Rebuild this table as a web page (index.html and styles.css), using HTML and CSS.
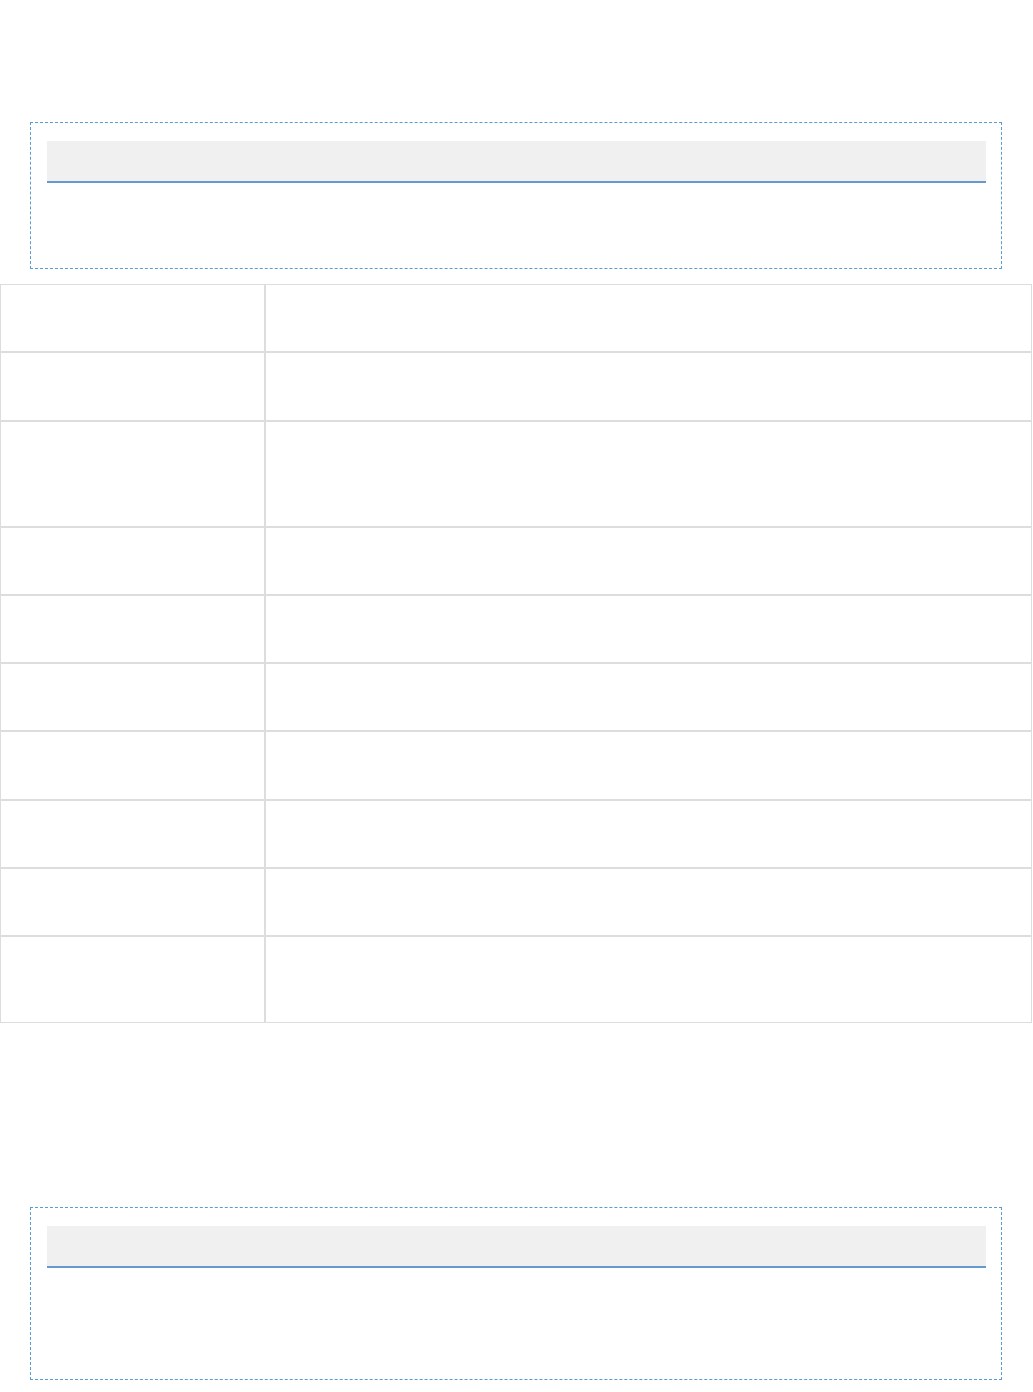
FILE: index.html
```html
<!DOCTYPE html>
<html lang="en">
<head>
    <meta charset="UTF-8" />
    <meta name="viewport" content="width=device-width, initial-scale=1" />
    <title>Layout</title>
    <link rel="stylesheet" href="styles.css">
</head>
<body>

    <section class="panel panel-top">
        <div class="panel-head"></div>
        <div class="panel-body"></div>
    </section>

    <table class="data-grid">
        <tr><td class="key"></td><td></td></tr>
        <tr><td class="key"></td><td></td></tr>
        <tr class="tall"><td class="key"></td><td></td></tr>
        <tr><td class="key"></td><td></td></tr>
        <tr><td class="key"></td><td></td></tr>
        <tr><td class="key"></td><td></td></tr>
        <tr><td class="key"></td><td></td></tr>
        <tr><td class="key"></td><td></td></tr>
        <tr><td class="key"></td><td></td></tr>
        <tr class="last"><td class="key"></td><td></td></tr>
    </table>

    <section class="panel panel-bottom">
        <div class="panel-head"></div>
        <div class="panel-body"></div>
    </section>

</body>
</html>
```

FILE: styles.css
```css
body {
    margin: 0;
    padding-top: 122px;
    font-family: "Liberation Sans", Arial, sans-serif;
    background: #fff;
    color: #333;
}

.panel {
    margin: 0 31px 0 30px;
    padding: 18px 15px 0 16px;
    border: 1px dashed #5b9bd5;
}

.panel-head {
    height: 40px;
    background: #f0f0f0;
    border-bottom: 2px solid #6699cc;
}

.panel-top .panel-body {
    height: 85px;
}

.panel-bottom {
    margin-top: 184px;
}

.panel-bottom .panel-body {
    height: 111px;
}

/* grid of empty rows */
.data-grid {
    width: 1032px;
    margin-top: 15px;
    border-collapse: separate;
    border-spacing: 0;
}

    .data-grid td {
        height: 66.25px;
        padding: 0;
        border: 1px solid #dddddd;
    }

    .data-grid td.key {
        width: 263px;
    }

    .data-grid tr.tall td {
        height: 104px;
    }

    .data-grid tr.last td {
        height: 85px;
    }
```
